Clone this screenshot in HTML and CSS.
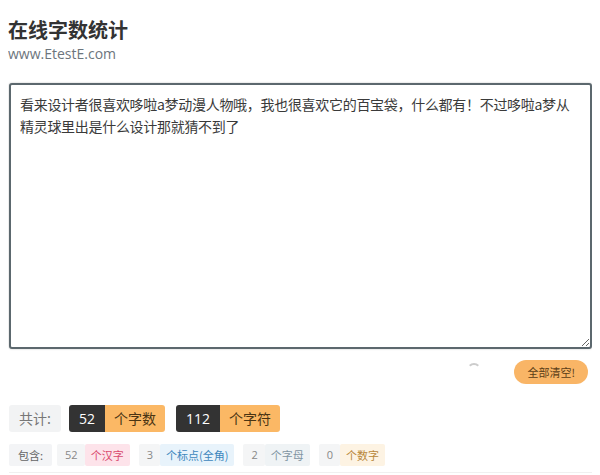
FILE: index.html
```html
<!DOCTYPE html>
<html lang="zh-CN">
<head>
    <meta charset="UTF-8">
    <meta name="viewport" content="width=device-width, initial-scale=1.0">
    <title>在线字数统计</title>
    <link rel="stylesheet" href="styles.css">
</head>
<body>

    <h1 class="title">在线字数统计</h1>
    <div class="site">www.EtestE.com</div>

    <textarea class="editor" id="content">看来设计者很喜欢哆啦a梦动漫人物哦，我也很喜欢它的百宝袋，什么都有！不过哆啦a梦从精灵球里出是什么设计那就猜不到了</textarea>

    <div class="actions">
        <span class="spinner"></span>
        <button class="clear-btn" type="button">全部清空!</button>
    </div>

    <div class="totals">
        <span class="total-label">共计:</span>
        <span class="stat">
            <span class="stat-num">52</span><span class="stat-unit">个字数</span>
        </span>
        <span class="stat">
            <span class="stat-num">112</span><span class="stat-unit">个字符</span>
        </span>
    </div>

    <div class="details">
        <span class="tag tag-label">包含:</span>
        <span class="group">
            <span class="tag tag-num">52</span><span class="tag tag-pink">个汉字</span>
        </span>
        <span class="group">
            <span class="tag tag-num">3</span><span class="tag tag-blue">个标点(全角)</span>
        </span>
        <span class="group">
            <span class="tag tag-num">2</span><span class="tag tag-gray">个字母</span>
        </span>
        <span class="group">
            <span class="tag tag-num">0</span><span class="tag tag-orange">个数字</span>
        </span>
    </div>

</body>
</html>
```

FILE: styles.css
```css
body {
    font-family: "Noto Sans CJK SC", "Noto Sans", sans-serif;
    margin: 8px;
    color: #333;
    background: #fff;
}
.title {
    font-size: 20px;
    line-height: 28px;
    font-weight: bold;
    margin: 8px 0 0;
    color: #333;
}
.site {
    font-family: "Open Sans", "Noto Sans", sans-serif;
    font-size: 14px;
    line-height: 20px;
    color: #6c757d;
}
.editor {
    display: block;
    box-sizing: border-box;
    width: 583px;
    height: 266px;
    margin: 19px 0 0 1px;
    padding: 8px 9px;
    border: 2px solid #5c686e;
    border-radius: 3px;
    box-shadow: 0 0 2px rgba(0, 0, 0, 0.25);
    font-family: "Noto Sans CJK SC", sans-serif;
    font-size: 14px;
    letter-spacing: -0.3px;
    line-height: 22px;
    color: #3a3a3a;
    resize: both;
    outline: none;
}
.actions {
    display: flex;
    justify-content: flex-end;
    align-items: center;
    gap: 33px;
    margin-top: 11px;
    padding-right: 4px;
}
.spinner {
    width: 10px;
    height: 10px;
    border: 2px solid transparent;
    border-top-color: #ccc;
    border-radius: 50%;
    margin-bottom: 4px;
}
.clear-btn {
    background: #f9b566;
    color: #5a3d17;
    border: none;
    border-radius: 12px;
    height: 24px;
    padding: 0 13px;
    font-family: "Noto Sans CJK SC", sans-serif;
    font-size: 11px;
    cursor: pointer;
}
.totals {
    display: flex;
    align-items: center;
    gap: 9px;
    margin-top: 21px;
    margin-left: 1px;
    font-size: 14px;
}
.total-label {
    background: #f2f3f4;
    color: #777;
    line-height: 27px;
    padding: 0 10px;
    border-radius: 3px;
    margin-right: -1px;
}
.stat {
    display: flex;
    border-radius: 3px;
    overflow: hidden;
    line-height: 27px;
    margin-right: 2px;
}
.stat-num {
    background: #333;
    color: #fff;
    padding: 0 10px;
    font-family: "Open Sans", sans-serif;
    font-size: 14px;
}
.stat-unit {
    background: #fbb865;
    color: #4a3413;
    padding: 0 9px;
}
.details {
    display: flex;
    align-items: center;
    gap: 9px;
    margin-top: 12px;
    margin-left: 1px;
    padding-bottom: 6px;
    border-bottom: 1px solid #f0f0f0;
    font-size: 11px;
}
.group {
    display: flex;
}
.tag {
    line-height: 22px;
    padding: 0 6px;
    border-radius: 2px;
}
.tag-label {
    background: #f3f4f6;
    color: #666;
    padding: 0 9px;
    margin-right: -4px;
}
.tag-num {
    background: #f4f5f6;
    color: #888;
    padding: 0 7px 0 8px;
    font-family: "Open Sans", sans-serif;
}
.tag-pink {
    background: #fde3ea;
    color: #d94a6e;
}
.tag-blue {
    background: #e8f3fb;
    color: #3d87bd;
}
.tag-gray {
    background: #eff3f5;
    color: #7f95a3;
}
.tag-orange {
    background: #fdf3e3;
    color: #b8873a;
}
```
